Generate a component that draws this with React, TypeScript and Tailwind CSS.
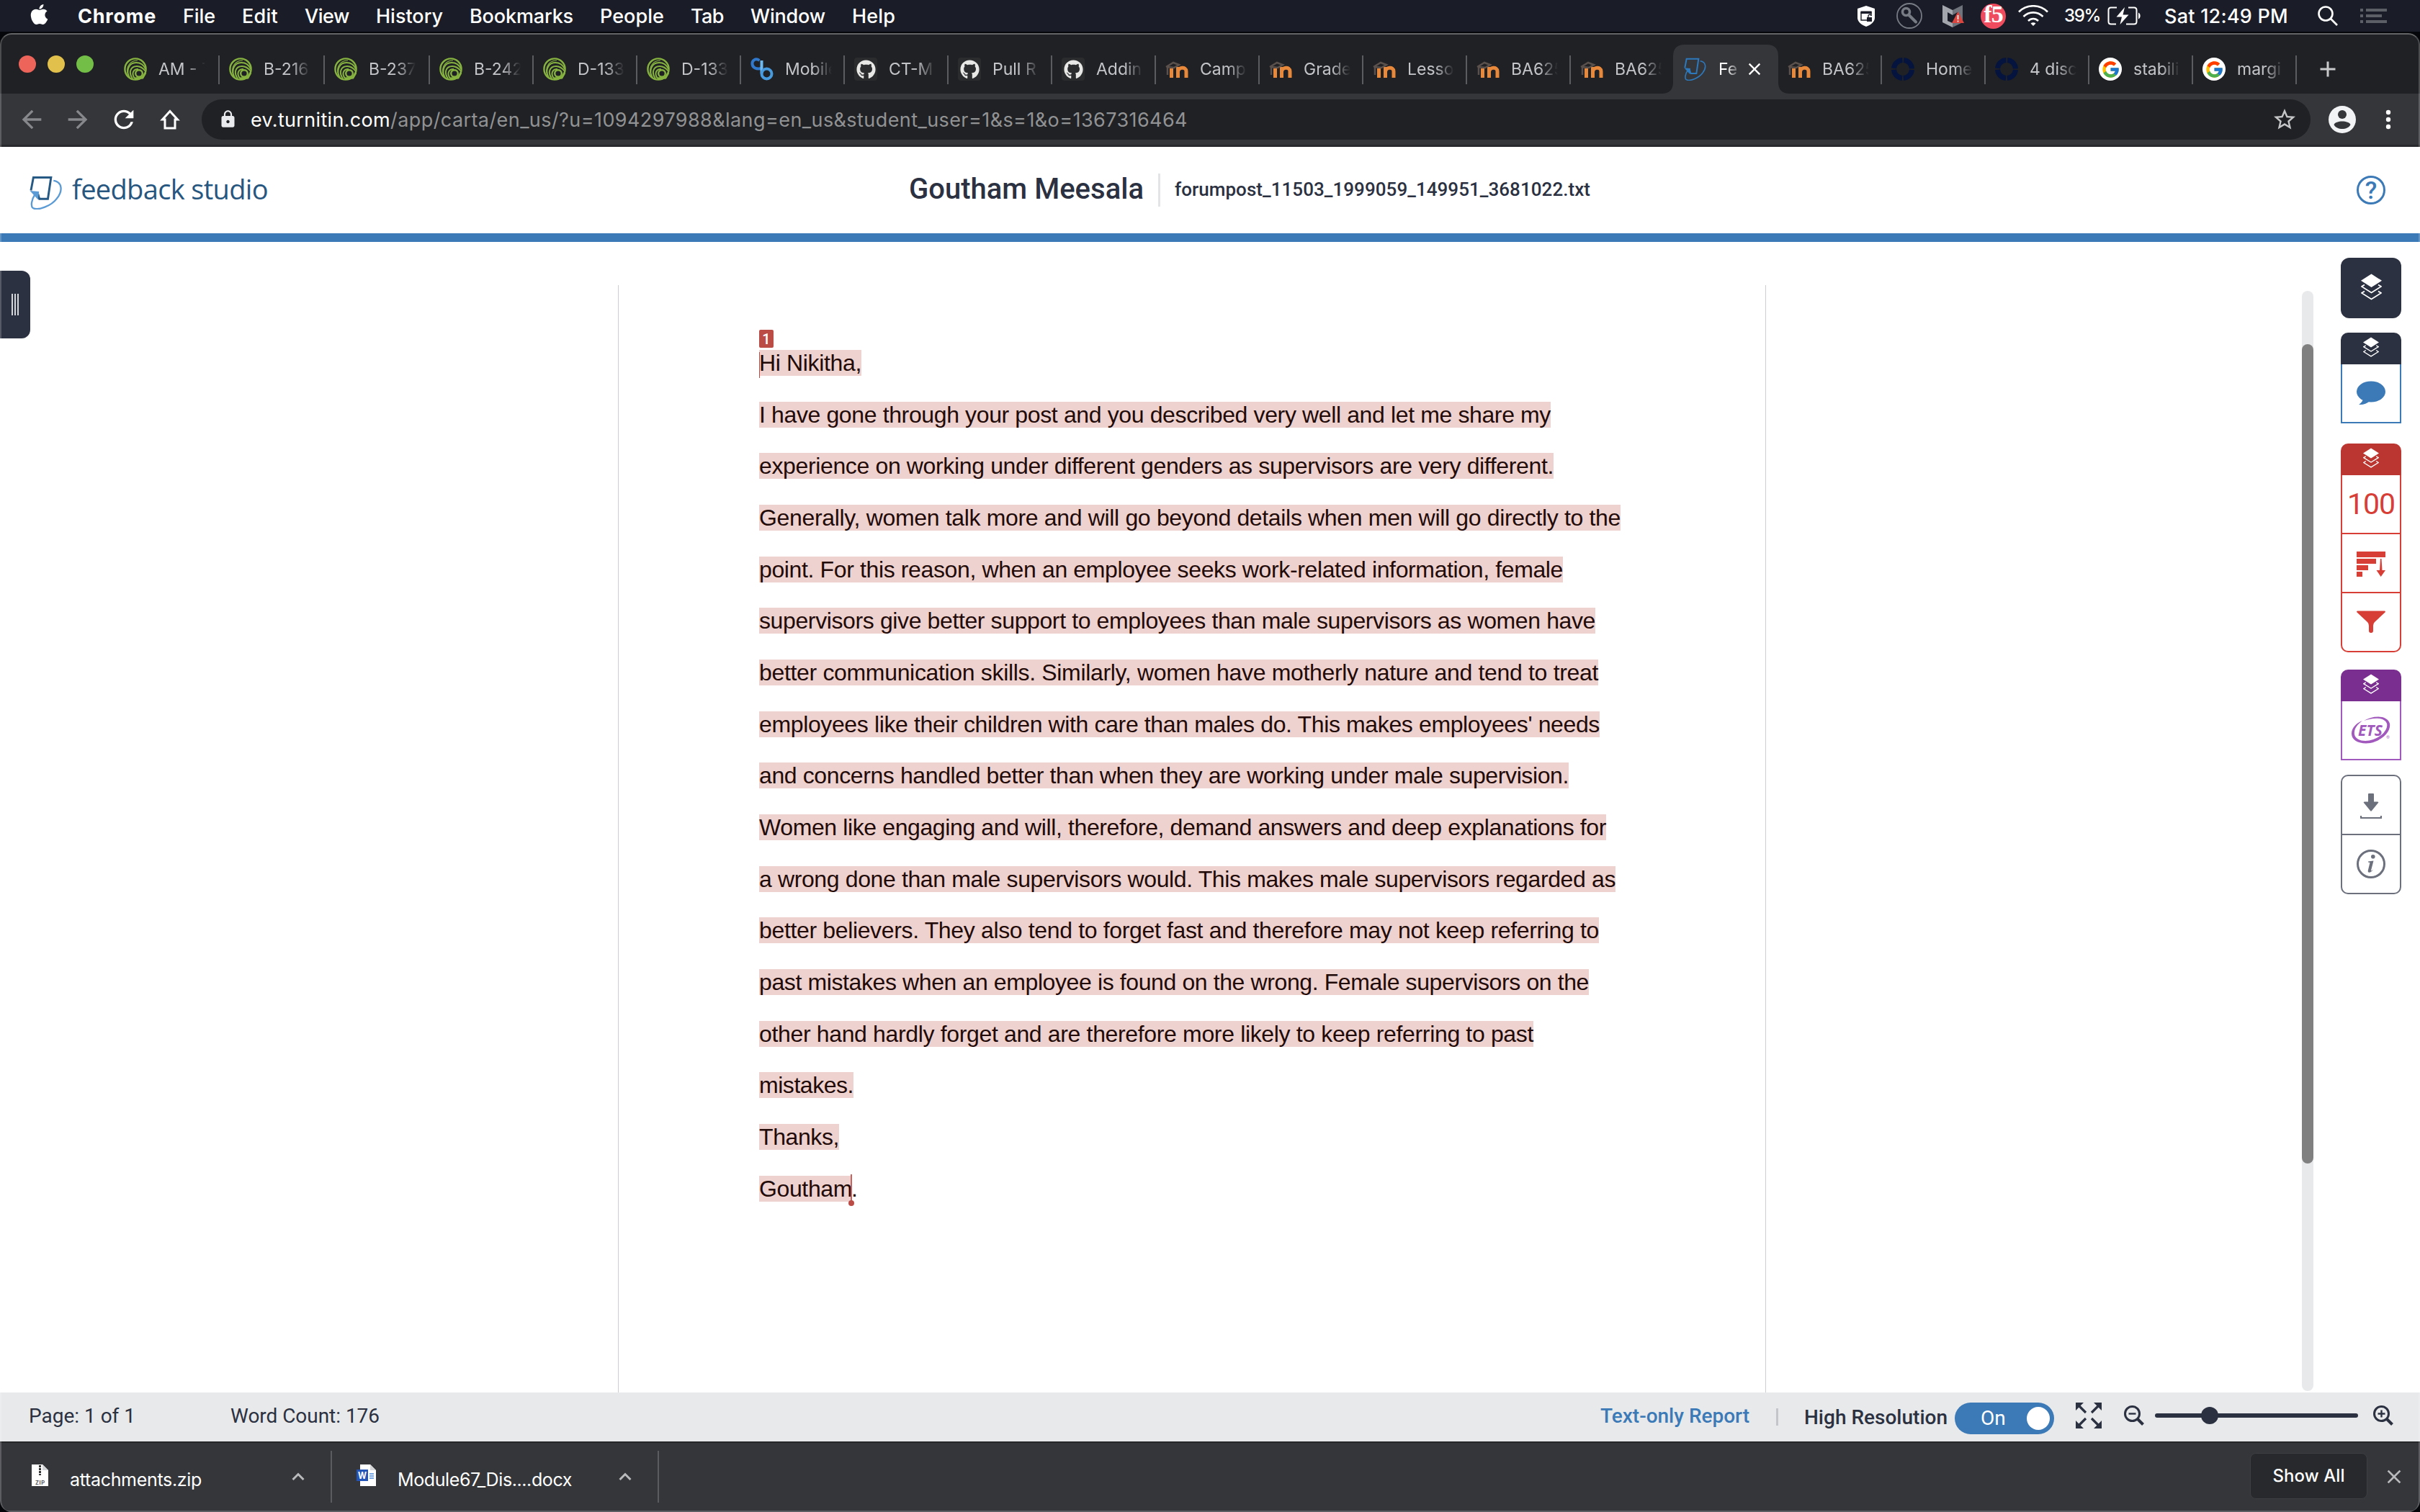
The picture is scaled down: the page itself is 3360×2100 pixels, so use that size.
import { useLayoutEffect, useRef, useState } from "react";
import type { ReactNode } from "react";
import { FaApple, FaGithub } from "react-icons/fa";
import { FcGoogle } from "react-icons/fc";
import {
  MdAdd,
  MdArrowBack,
  MdArrowForward,
  MdClose,
  MdLock,
  MdRefresh,
  MdStarBorder,
} from "react-icons/md";

const menuItems = [
  { label: "Chrome", w: 109, bold: true },
  { label: "File", w: 45 },
  { label: "Edit", w: 50 },
  { label: "View", w: 62 },
  { label: "History", w: 93 },
  { label: "Bookmarks", w: 144 },
  { label: "People", w: 89 },
  { label: "Tab", w: 46 },
  { label: "Window", w: 104 },
  { label: "Help", w: 60 },
];

type TabKind = "green" | "bridge" | "github" | "moodle" | "turnitin" | "ring" | "google";

const tabs: { label: string; kind: TabKind; wide?: boolean; active?: boolean; noLine?: boolean }[] = [
  { label: "AM - T", kind: "green", wide: true },
  { label: "B-216", kind: "green", wide: true },
  { label: "B-237", kind: "green", wide: true },
  { label: "B-242", kind: "green" },
  { label: "D-133", kind: "green" },
  { label: "D-133", kind: "green" },
  { label: "Mobile", kind: "bridge" },
  { label: "CT-M", kind: "github" },
  { label: "Pull R", kind: "github" },
  { label: "Addin", kind: "github" },
  { label: "Camp", kind: "moodle" },
  { label: "Grade", kind: "moodle" },
  { label: "Lesso", kind: "moodle" },
  { label: "BA625", kind: "moodle" },
  { label: "BA625", kind: "moodle", noLine: true },
  { label: "Fe", kind: "turnitin", active: true, noLine: true },
  { label: "BA625", kind: "moodle" },
  { label: "Home", kind: "ring" },
  { label: "4 disc", kind: "ring" },
  { label: "stabili", kind: "google" },
  { label: "margi", kind: "google" },
];

const lines = [
  { text: "Hi Nikitha,", w: 142 },
  { text: "I have gone through your post and you described very well and let me share my", w: 1099 },
  { text: "experience on working under different genders as supervisors are very different.", w: 1103 },
  { text: "Generally, women talk more and will go beyond details when men will go directly to the", w: 1196 },
  { text: "point. For this reason, when an employee seeks work-related information, female", w: 1116 },
  { text: "supervisors give better support to employees than male supervisors as women have", w: 1161 },
  { text: "better communication skills. Similarly, women have motherly nature and tend to treat", w: 1165 },
  { text: "employees like their children with care than males do. This makes employees' needs", w: 1167 },
  { text: "and concerns handled better than when they are working under male supervision.", w: 1124 },
  { text: "Women like engaging and will, therefore, demand answers and deep explanations for", w: 1176 },
  { text: "a wrong done than male supervisors would. This makes male supervisors regarded as", w: 1189 },
  { text: "better believers. They also tend to forget fast and therefore may not keep referring to", w: 1166 },
  { text: "past mistakes when an employee is found on the wrong. Female supervisors on the", w: 1152 },
  { text: "other hand hardly forget and are therefore more likely to keep referring to past", w: 1075 },
  { text: "mistakes.", w: 131 },
  { text: "Thanks,", w: 111 },
];

// Spreads a single run of text over exactly w pixels
function Fit({ w, className = "", children }: { w: number; className?: string; children: string }) {
  const ref = useRef<HTMLSpanElement>(null);
  const [spacing, setSpacing] = useState(0);

  useLayoutEffect(() => {
    if (ref.current) {
      setSpacing((w - ref.current.getBoundingClientRect().width) / children.length);
    }
  }, []);

  return (
    <span ref={ref} className={`whitespace-pre ${className}`} style={{ letterSpacing: spacing }}>
      {children}
    </span>
  );
}

function TurnitinMark({ size, dark, light }: { size: number; dark: string; light: string }) {
  return (
    <svg width={size} height={size} viewBox="0 0 48 48" fill="none">
      <path d="M2 21L5.500 2.500H30.500L26 33H14L12 26" stroke={dark} strokeWidth="3" />
      <path d="M34 7C47 9 47 22 39 32C31 43 12 50 5 46C1 43 3 34 8 26" stroke={light} strokeWidth="2.400" />
      <path d="M0.500 21.500L13.500 22.500L12 34Z" fill={light} />
    </svg>
  );
}

function Favicon({ kind }: { kind: TabKind }) {
  switch (kind) {
    case "green":
      return (
        <svg width="32" height="32" viewBox="0 0 32 32" fill="none" stroke="#86b340">
          <circle cx="16" cy="16" r="14.600" strokeWidth="2.400" />
          <path d="M8 28C2 18 7 7 17 7C24 7 28 11 30 16" strokeWidth="2" />
          <path d="M12 29C6 21 9 12 18 12C24 12 27 15 30 19" strokeWidth="2" />
          <path d="M5 22C3 12 9 4 19 4" strokeWidth="1.200" />
          <path d="M15 29C10 22 13 16 20 16" strokeWidth="2" />
          <circle cx="21" cy="22" r="4.800" strokeWidth="2.400" />
          <path d="M15 29L26 28L30 21" strokeWidth="3" />
        </svg>
      );
    case "bridge":
      return (
        <svg width="32" height="32" viewBox="0 0 32 32" fill="none" strokeWidth="4">
          <path d="M12.500 4C7 0 2 4 2.500 9C3 14 8 16.500 15 15" stroke="#2f78cc" />
          <path d="M15.500 4V22" stroke="#6db9f0" />
          <circle cx="22.500" cy="22.500" r="7" stroke="#479ade" />
        </svg>
      );
    case "github":
      return (
        <span className="flex size-8 items-center justify-center rounded-sm bg-[#2b2c2e]">
          <FaGithub className="size-[27px] text-[#e8e8e6]" />
        </span>
      );
    case "moodle":
      return (
        <svg width="32" height="32" viewBox="0 0 32 32" fill="none">
          <path d="M17.500 28V13M17.500 20C17.500 13 29 12 29 19V28" stroke="#e8883a" strokeWidth="5" />
          <path d="M8.500 28V15" stroke="#e8883a" strokeWidth="5" />
          <path d="M1 13L11 7L19 10L12 14L3 13V24" stroke="#5b514c" strokeWidth="2.500" />
        </svg>
      );
    case "turnitin":
      return <TurnitinMark size={32} dark="#2d79bd" light="#2d79bd" />;
    case "ring":
      return (
        <svg width="32" height="32" viewBox="0 0 32 32" fill="none">
          <circle cx="16" cy="16" r="12.500" stroke="#04143f" strokeWidth="7" strokeDasharray="17.600 2" strokeDashoffset="-1" />
        </svg>
      );
    default:
      return (
        <span className="flex size-8 items-center justify-center rounded-full bg-white">
          <FcGoogle className="size-[27px]" />
        </span>
      );
  }
}

function StackIcon({ small }: { small?: boolean }) {
  return (
    <svg width={small ? 22 : 29} height={small ? 28 : 37} viewBox="0 0 29 37" fill="none">
      <path d="M14.500 0.500L29 9.800L14.500 19L0 9.800Z" fill="#fff" />
      <path d="M5 15.500L1 18L14.500 26.500L28 18L24 15.500" stroke="#fff" strokeWidth="1.700" />
      <path d="M5 24.500L1 27L14.500 35.500L28 27L24 24.500" stroke="#fff" strokeWidth="1.700" />
    </svg>
  );
}

function MenuBar() {
  return (
    <div className="flex h-[46px] items-center border-b-2 border-[#05060a] bg-[#1a1d27] text-[27px] leading-none text-white">
      <FaApple className="ml-[37px] -mt-1 h-8 w-[35px]" />
      <div className="ml-9 flex items-center gap-[37px]">
        {menuItems.map((m) => (
          <Fit key={m.label} w={m.w} className={m.bold ? "font-bold" : "font-medium"}>
            {m.label}
          </Fit>
        ))}
      </div>

      <div className="ml-auto flex items-center">
        <svg width="24" height="29" viewBox="0 0 24 29">
          <path d="M12 0L24 4V17C24 22 18 27 12 29C6 27 0 22 0 17V4Z" fill="#fff" />
          <path d="M5 8.500V20H13M19 8V14" stroke="#1a1d27" strokeWidth="1.400" fill="none" />
          <path d="M4.500 7.500H19.500V11H4.500Z" fill="#1a1d27" />
          <path d="M13 16H20V22H13Z" fill="#1a1d27" />
          <path d="M15 16V14.500A2 2 0 0 1 19 14" stroke="#1a1d27" strokeWidth="1.300" fill="none" />
        </svg>
        <svg className="ml-[30px]" width="36" height="36" viewBox="0 0 36 36" fill="none" stroke="#777b84">
          <circle cx="18" cy="18" r="17" strokeWidth="1.800" />
          <circle cx="13.500" cy="12.500" r="5" strokeWidth="3.600" />
          <path d="M17 16.500L27 26.500" strokeWidth="4" strokeLinecap="round" />
        </svg>
        <svg className="ml-7" width="30" height="32" viewBox="0 0 30 32">
          <path d="M0 1L14 8V15L7 11V23L14 26V32L0 25Z" fill="#a3a6ac" />
          <path d="M28 1L14 8V15L21 11V23L14 26V32L28 25Z" fill="#6f737b" />
          <path d="M21.500 10L30 26H13Z" fill="#d9453f" />
          <path d="M21.500 15V21M21.500 22.500V24.500" stroke="#fff" strokeWidth="1.600" />
        </svg>
        <span className="ml-[23px] flex size-[35px] items-center justify-center rounded-full bg-[#ef4d5f]">
          <span className="-mt-1 font-['Liberation_Serif',serif] text-[34px] leading-none font-bold tracking-[-1px]">f5</span>
        </span>
        <svg className="ml-[17px]" width="42" height="30" viewBox="0 0 42 30" fill="none" stroke="#fff" strokeWidth="2.600">
          <path d="M1 9.500C12 -1.500 30 -1.500 41 9.500" />
          <path d="M7.500 16C15 8.500 27 8.500 34.500 16" />
          <path d="M14 22C18 18 24 18 28 22" />
          <path d="M17.500 25.500C19.500 23.800 22.500 23.800 24.500 25.500L21 29Z" fill="#fff" stroke="none" />
        </svg>
        <Fit w={50} className="ml-[22px] text-2xl leading-none font-medium">39%</Fit>
        <svg className="ml-2.5" width="46" height="26" viewBox="0 0 46 26" fill="none">
          <path d="M13 1.500H5Q1.500 1.500 1.500 5V21Q1.500 24.500 5 24.500H12M29 1.500H37Q40.500 1.500 40.500 5V21Q40.500 24.500 37 24.500H26" stroke="#fff" strokeWidth="2" />
          <path d="M24 1L12.500 14.500H20L17.500 25L29.500 11.500H21.500Z" fill="#fff" />
          <path d="M43 8.500C46.500 10 46.500 16 43 17.500Z" fill="#fff" />
        </svg>
        <Fit w={172} className="ml-[33px] font-medium">Sat 12:49 PM</Fit>
        <svg className="ml-[41px]" width="28" height="28" viewBox="0 0 28 28" fill="none" stroke="#fff" strokeWidth="2.600">
          <circle cx="11" cy="11" r="9.500" />
          <path d="M18 18L27 27" />
        </svg>
        <svg className="mr-[46px] ml-[31px]" width="37" height="20" viewBox="0 0 37 20" fill="#5c5f66">
          <path d="M0 0H4V4H0ZM8 0H37V4H8ZM0 8H4V12H0ZM8 8H30V12H8ZM0 16H4V20H0ZM8 16H37V20H8Z" />
        </svg>
      </div>
    </div>
  );
}

function TabStrip() {
  return (
    <div className="flex h-[84px] items-end bg-[#202124]">
      <div className="flex h-[68px] items-center">
        <div className="-mt-3.5 flex w-[159px] items-center gap-4 pl-[26px]">
          <span className="size-6 rounded-full bg-[#ed655a]" />
          <span className="size-6 rounded-full bg-[#e1c04c]" />
          <span className="size-6 rounded-full bg-[#72be47]" />
        </div>
        {tabs.map((t, i) => (
          <div
            key={i}
            className={`relative flex h-[68px] shrink-0 items-center pl-[13px] ${t.wide ? "w-[146px]" : "w-[144px]"}`}
          >
            {t.active && (
              <svg className="absolute top-0 -left-[18px]" width="178" height="68" viewBox="0 0 178 68">
                <path d="M0 68Q16 68 16 52V16Q16 0 32 0H146Q162 0 162 16V52Q162 68 178 68Z" fill="#35363a" />
              </svg>
            )}
            <span className="relative shrink-0">
              <Favicon kind={t.kind} />
            </span>
            {t.active ? (
              <>
                <span className="relative ml-4 w-7 overflow-hidden text-[23px] leading-8 whitespace-nowrap text-white [mask-image:linear-gradient(to_right,#000_40%,transparent_110%)]">
                  {t.label}
                </span>
                <MdClose className="relative ml-2 size-[28px] text-white" />
              </>
            ) : (
              <span className="ml-4 w-[65px] overflow-hidden text-[23px] leading-8 whitespace-nowrap text-[#c3c5c9] [mask-image:linear-gradient(to_right,#000_60%,transparent)]">
                {t.label}
              </span>
            )}
            {!t.noLine && <span className="absolute top-[15px] right-0 h-10 w-0.5 bg-[#5b5c60]" />}
          </div>
        ))}
        <MdAdd className="ml-[25px] size-[36px] text-[#c8c9cb]" />
      </div>
    </div>
  );
}

function AddressBar() {
  return (
    <div className="flex h-[74px] items-center border-b-[3px] border-[#28292c] bg-[#35363a] pl-6 text-white">
      <div className="flex items-center gap-6">
        <MdArrowBack className="size-10 text-[#87888b]" />
        <MdArrowForward className="size-10 text-[#87888b]" />
        <MdRefresh className="size-10" />
        <svg width="40" height="40" viewBox="0 0 40 40" fill="none" stroke="#fff" strokeWidth="3">
          <path d="M20 8.500L30.500 20H27V32H13V20H9.500Z" />
        </svg>
      </div>
      <div className="ml-6 flex h-14 w-[2928px] items-center rounded-full bg-[#202124] pr-[18px] pl-[23px]">
        <MdLock className="size-[27px] text-[#e8eaed]" />
        <div className="mt-0.5 ml-[18px] text-[27px] leading-none">
          <Fit w={194}>ev.turnitin.com</Fit>
          <Fit w={1107} className="text-[#919294]">
            /app/carta/en_us/?u=1094297988&lang=en_us&student_user=1&s=1&o=1367316464
          </Fit>
        </div>
        <MdStarBorder className="ml-auto size-9 text-[#c5c6c8]" />
      </div>
      <svg className="ml-[25px]" width="38" height="38" viewBox="0 0 38 38">
        <circle cx="19" cy="19" r="19" fill="#f1f3f4" />
        <circle cx="19" cy="12" r="6" fill="#35363a" />
        <path d="M7.500 26C10 20 28 20 30.500 26C27 34 11 34 7.500 26Z" fill="#35363a" />
      </svg>
      <svg className="ml-[41px]" width="8" height="28" viewBox="0 0 8 28" fill="#fff">
        <circle cx="4" cy="4" r="3.200" />
        <circle cx="4" cy="14" r="3.200" />
        <circle cx="4" cy="24" r="3.200" />
      </svg>
    </div>
  );
}

function StudioHeader() {
  return (
    <header className="grid h-[132px] grid-cols-[1262px_1fr_auto] items-center border-b-12 border-[#3b7ab7] bg-white font-[Roboto,sans-serif] text-[#2b3141]">
      <div className="flex items-center pt-1.5 pl-[41px]">
        <TurnitinMark size={47} dark="#265a85" light="#5b9bd5" />
        <Fit w={272} className="-mt-2.5 ml-3 font-['Open_Sans',sans-serif] text-[38px] leading-none text-[#27567f]">
          feedback studio
        </Fit>
      </div>
      <div className="flex items-center">
        <Fit w={326} className="-mt-0.5 text-[40px] leading-none font-medium">Goutham Meesala</Fit>
        <span className="ml-5 h-[46px] w-[3px] bg-[#e3e4e6]" />
        <Fit w={577} className="-mt-0.5 ml-5 text-[26px] leading-none font-medium">
          forumpost_11503_1999059_149951_3681022.txt
        </Fit>
      </div>
      <span className="mr-12 flex size-10 items-center justify-center rounded-full border-3 border-[#3b7ab7] text-[34px] leading-none font-medium text-[#3b7ab7]">
        ?
      </span>
    </header>
  );
}

function Document() {
  return (
    <div className="mt-[60px] ml-[816px] w-[1594px] border-x border-[#cdced0] pt-[73px] pl-[195px] font-['Liberation_Sans',sans-serif] text-[32px] leading-[71.650px] text-[#220a08]">
      {lines.map((l, i) => (
        <div key={i} className="relative">
          {i === 0 && (
            <>
              <span className="absolute top-5 left-0 h-9 w-px bg-[#bb4c45]" />
              <span className="absolute -top-[11px] left-0 flex h-[25px] w-5 items-center justify-center rounded-xs bg-[#bb4c45] font-[Roboto,sans-serif] text-xl leading-none font-medium text-white">
                1
              </span>
            </>
          )}
          <Fit w={l.w} className="bg-[#eed2cf]">{l.text}</Fit>
        </div>
      ))}
      <div>
        <span className="relative">
          <Fit w={129} className="bg-[#eed2cf]">Goutham</Fit>
          <span className="absolute -top-0.5 right-0 h-[43px] w-0.5 bg-[#c9635d]" />
          <span className="absolute -right-[3px] -bottom-1.5 size-2 rounded-full bg-[#bb4c45]" />
        </span>
        <span className="-ml-px">.</span>
      </div>
    </div>
  );
}

function ToolGroup({ head, children }: { head: string; children: ReactNode }) {
  return (
    <div className="w-[84px]">
      <div className={`flex h-11 items-center justify-center rounded-t-[10px] pb-1 ${head}`}>
        <StackIcon small />
      </div>
      {children}
    </div>
  );
}

function ToolBar() {
  return (
    <div className="ml-[38px] flex flex-col pt-[22px] font-[Roboto,sans-serif]">
      <div className="flex size-[84px] items-center justify-center rounded-xl bg-[#2b3141] pb-1">
        <StackIcon />
      </div>

      <div className="mt-5">
        <ToolGroup head="bg-[#2b3141]">
          <div className="flex h-[82px] items-center justify-center border-2 border-t-0 border-[#3b7ab7]">
            <svg width="40" height="34" viewBox="0 0 40 34" fill="#3b7ab7">
              <ellipse cx="20" cy="15" rx="20" ry="14.500" />
              <path d="M9 24C9 28 6 31 3 33C9 33.500 14 32 18 28Z" />
            </svg>
          </div>
        </ToolGroup>
      </div>

      <div className="mt-7">
        <ToolGroup head="bg-[#bb3631]">
          <div className="divide-y-2 divide-[#d63e36] rounded-b-[10px] border-2 border-t-0 border-[#d63e36] text-[#d63e36]">
            <div className="flex h-[82px] items-center justify-center text-[41px] leading-none">
              <Fit w={66}>100</Fit>
            </div>
            <div className="flex h-[82px] items-center justify-center pt-1">
              <svg width="40" height="36" viewBox="0 0 40 36" fill="#d63e36">
                <path d="M0 0H40V8H0ZM0 10H27V17H0ZM0 19H16V26H0ZM0 28H8V35H0Z" />
                <path d="M33 10H34.500L35.500 26H40L33.700 35L27.500 26H32Z" />
              </svg>
            </div>
            <div className="flex h-[80px] items-center justify-center">
              <svg width="40" height="32" viewBox="0 0 40 32" fill="#d63e36">
                <path d="M1 0.500H39Q40.500 1 39.500 2.500L25 16Q23 18 23 21V28Q23 31 20 31Q17 31 17 28V21Q17 18 15 16L0.500 2.500Q-0.500 1 1 0.500Z" />
              </svg>
            </div>
          </div>
        </ToolGroup>
      </div>

      <div className="mt-6">
        <ToolGroup head="bg-[#7a2f90]">
          <div className="flex h-[82px] items-center justify-center border-2 border-t-0 border-[#a259bd]">
            <svg width="54" height="38" viewBox="0 0 54 38">
              <path
                d="M17 6C30 -2 50 -2 53 10C55 22 41 34 26 37C12 39 0 34 0 24C0 17 5 10 15 6C7 12 3 18 4 25C6 34 19 36 30 32C42 28 51 18 49 10C46 1 30 1 17 6Z"
                fill="#a259bd"
              />
              <text x="9" y="26.500" fontSize="21" fontWeight="700" fontStyle="italic" textLength="34" fontFamily="Open Sans, sans-serif" fill="#a259bd">
                ETS
              </text>
              <text x="48" y="31" fontSize="6" fontFamily="Open Sans, sans-serif" fill="#a259bd">®</text>
            </svg>
          </div>
        </ToolGroup>
      </div>

      <div className="mt-5 w-[84px] divide-y-2 divide-[#6b707c] rounded-[10px] border-2 border-[#6b707c]">
        <div className="flex h-[82px] items-center justify-center pt-1">
          <svg width="30" height="36" viewBox="0 0 30 36" fill="#6b707c">
            <path d="M12 0H18Q19 0 19 1V11.500H24Q26 11.500 25 13L16 24Q15 25.500 14 24L5 13Q4 11.500 6 11.500H11V1Q11 0 12 0Z" />
            <path d="M1 31V34H29V31" stroke="#6b707c" strokeWidth="2.200" fill="none" />
          </svg>
        </div>
        <div className="flex h-[80px] items-center justify-center">
          <svg width="40" height="40" viewBox="0 0 40 40">
            <circle cx="20" cy="20" r="18.500" fill="none" stroke="#6b707c" strokeWidth="3" />
            <circle cx="22.800" cy="9.800" r="2.800" fill="#6b707c" />
            <path d="M16 16.500L23.500 15.500L20 29C20.500 30 22 28.500 23 27.500C21 31.500 15 34 15.800 29L18.500 18L16 17.500Z" fill="#6b707c" />
          </svg>
        </div>
      </div>
    </div>
  );
}

function Viewer() {
  return (
    <main className="flex h-[1598px] bg-white">
      <div className="mt-10 flex h-[94px] w-[42px] items-center justify-center gap-0.5 rounded-r-xl bg-[#2b3141]">
        <span className="h-[30px] w-0.5 bg-[#d5d6da]" />
        <span className="h-[30px] w-0.5 bg-[#d5d6da]" />
        <span className="h-[30px] w-0.5 bg-[#d5d6da]" />
      </div>
      <Document />
      <div className="mt-[68px] ml-[744px] h-[1528px] w-4 rounded-full bg-[#e8e9eb] pt-[74px]">
        <div className="h-[1138px] rounded-full bg-[#808080]" />
      </div>
      <ToolBar />
    </main>
  );
}

function ZoomIcon({ plus }: { plus?: boolean }) {
  return (
    <svg width="28" height="28" viewBox="0 0 28 28" fill="none" stroke="#2b3141">
      <circle cx="11.500" cy="11.500" r="10" strokeWidth="3" />
      <path d="M19 19L26.500 26.500" strokeWidth="4" />
      <path d={plus ? "M6.500 11.500H16.500M11.500 6.500V16.500" : "M6.500 11.500H16.500"} strokeWidth="2.400" />
    </svg>
  );
}

function StatusBar() {
  return (
    <div className="flex h-[68px] items-center bg-[#e8e9eb] pl-10 font-[Roboto,sans-serif] text-[28px] leading-none text-[#2b3141]">
      <Fit w={148} className="-mt-0.5">Page: 1 of 1</Fit>
      <Fit w={207} className="-mt-0.5 ml-[132px]">Word Count: 176</Fit>
      <Fit w={207} className="-mt-0.5 ml-auto font-medium text-[#3b7ab7]">Text-only Report</Fit>
      <span className="ml-[37px] h-6 w-[3px] bg-[#c3c5ca]" />
      <Fit w={199} className="mt-0.5 ml-9 font-medium">High Resolution</Fit>
      <div className="ml-2.5 mt-1 flex h-11 w-[138px] items-center justify-between rounded-full bg-[#3b7ab7] pr-1.5 pl-9 text-white">
        <span>On</span>
        <span className="size-8 rounded-full bg-white" />
      </div>
      <svg className="ml-[30px] -mt-1" width="36" height="36" viewBox="0 0 36 36" fill="#2b3141" stroke="#2b3141">
        <path d="M0 0H11L0 11ZM36 0V11L25 0ZM0 36V25L11 36ZM36 36H25L36 25Z" stroke="none" />
        <path d="M3 3L14 14M33 3L22 14M3 33L14 22M33 33L22 22" strokeWidth="3.200" />
      </svg>
      <div className="-mt-1 mr-[37px] ml-[31px] flex items-center">
        <ZoomIcon />
        <div className="relative mr-[21px] ml-[15px] h-1.5 w-[282px] rounded-sm bg-[#2b3141]">
          <span className="absolute -top-[9px] left-[64px] size-6 rounded-full bg-[#2b3141]" />
        </div>
        <ZoomIcon plus />
      </div>
    </div>
  );
}

function Chevron() {
  return (
    <svg width="18" height="11" viewBox="0 0 18 11" fill="none" stroke="#b9babc" strokeWidth="3">
      <path d="M1.500 10L9 2.500L16.500 10" />
    </svg>
  );
}

function DownloadBar() {
  return (
    <div className="flex h-[98px] items-center border-t-2 border-b-2 border-t-[#262729] border-b-[#5e5f63] bg-[#35363a] text-[25px] leading-none text-white">
      <svg className="-mt-1 ml-11" width="24" height="30" viewBox="0 0 24 30">
        <path d="M0 0H15L23 8V30H0Z" fill="#fff" />
        <path d="M15 0V8H23Z" fill="#d5d6d8" />
        <path d="M11.500 1V15" stroke="#333" strokeWidth="3" strokeDasharray="3 1" />
        <text x="5" y="27.500" fontSize="7.500" fontWeight="600" textLength="13" fill="#444">ZIP</text>
      </svg>
      <Fit w={183} className="mt-2 ml-[29px]">attachments.zip</Fit>
      <span className="-mt-0.5 ml-[125px]">
        <Chevron />
      </span>
      <span className="ml-[36px] h-[72px] w-0.5 bg-[#5b5c60]" />
      <svg className="-mt-1 ml-[34px]" width="28" height="30" viewBox="0 0 28 30">
        <path d="M5 0H19L27 8V30H5Z" fill="#fff" />
        <path d="M19 0V8H27Z" fill="#d5d6d8" />
        <path d="M0 7H16V23H0Z" fill="#2354b8" />
        <path d="M18 13H24M18 16H24M18 19H24" stroke="#4a8be0" strokeWidth="1.300" />
        <text x="2" y="20" fontSize="13" fontWeight="700" textLength="12" lengthAdjust="spacingAndGlyphs" fill="#fff">W</text>
      </svg>
      <Fit w={242} className="mt-2 ml-[29px]">Module67_Dis....docx</Fit>
      <span className="-mt-0.5 ml-[65px]">
        <Chevron />
      </span>
      <span className="ml-[36px] h-[72px] w-0.5 bg-[#5b5c60]" />
      <div className="-mt-0.5 ml-auto flex h-16 w-[163px] items-center justify-center rounded-lg border border-[#3e3f42] bg-[#28292c] text-[24px] font-medium">
        <Fit w={100}>Show All</Fit>
      </div>
      <MdClose className="mr-[20px] ml-[21px] size-[32px] text-[#b9babc]" />
    </div>
  );
}

export default function App() {
  return (
    <div className="h-[2100px] w-[3360px] overflow-hidden bg-[#05060a] font-[Inter,sans-serif]">
      <MenuBar />
      <div className="relative h-[2054px] overflow-hidden rounded-2xl">
        <TabStrip />
        <AddressBar />
        <StudioHeader />
        <Viewer />
        <StatusBar />
        <DownloadBar />
        {/* window edge */}
        <div className="pointer-events-none absolute inset-0 rounded-2xl border-2 border-b-0 border-white/20 border-t-white/30" />
      </div>
    </div>
  );
}
